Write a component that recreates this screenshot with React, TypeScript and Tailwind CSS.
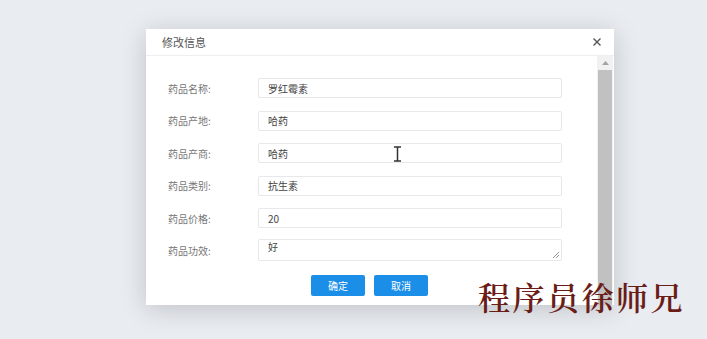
import React from "react";

const rows = [
  { label: "药品名称:", value: "罗红霉素" },
  { label: "药品产地:", value: "哈药" },
  { label: "药品产商:", value: "哈药" },
  { label: "药品类别:", value: "抗生素" },
  { label: "药品价格:", value: "20" },
];

export default function App() {
  const font = { fontFamily: '"Noto Sans CJK SC", "Noto Sans", sans-serif' };
  return (
    <div
      className="relative w-[707px] h-[339px] overflow-hidden bg-[#e9ecf1] pl-[146px] pt-[29px]"
      style={font}
    >
      <div className="w-[468px] h-[276px] bg-white flex flex-col shadow-[0_4px_24px_rgba(0,0,0,0.18)]">
        <div className="h-[27px] flex items-center justify-between pl-[16px] pr-[12px] border-b border-[#eeeeee] shrink-0">
          <span className="text-[11px] text-[#555]">修改信息</span>
          <svg width="10" height="10" viewBox="0 0 10 10">
            <path d="M1.5 1.5 L8.5 8.5 M8.5 1.5 L1.5 8.5" stroke="#555" strokeWidth="1.4" />
          </svg>
        </div>
        <div className="flex-1 flex min-h-0">
          <div className="flex-1 flex flex-col pt-[22px]">
            {rows.map((r) => (
              <div key={r.label} className="flex items-center h-[20px] mb-[12.5px]">
                <span className="w-[112px] pl-[22px] text-[10px] text-[#777]">{r.label}</span>
                <div className="w-[304px] h-[20px] border border-[#e6e8ec] rounded-[2px] flex items-center pl-[9px] text-[10px] text-[#444]">
                  {r.value}
                </div>
              </div>
            ))}
            <div className="flex items-start h-[22px] -mt-[2px]">
              <span className="w-[112px] pl-[22px] text-[10px] text-[#777] pt-[4px]">药品功效:</span>
              <div className="relative w-[304px] h-[22px] border border-[#e6e8ec] rounded-[2px] pl-[9px] text-[10px] text-[#444] leading-[14px]">
                好
                <svg className="absolute right-[1px] bottom-[1px]" width="8" height="8" viewBox="0 0 8 8">
                  <path d="M7 1 L1 7 M7 4 L4 7" stroke="#888" strokeWidth="0.9" />
                </svg>
              </div>
            </div>
            <div className="flex justify-center gap-[9px] mt-[14px] pr-[4px]">
              <button className="w-[54px] h-[21px] bg-[#1b8fe7] text-white text-[10px] rounded-[2px]">确定</button>
              <button className="w-[54px] h-[21px] bg-[#1b8fe7] text-white text-[10px] rounded-[2px]">取消</button>
            </div>
          </div>
          <div className="w-[16px] bg-[#f1f1f1] flex flex-col mr-[1px]">
            <div className="h-[14px] flex items-center justify-center">
              <svg width="7" height="4" viewBox="0 0 7 4">
                <path d="M0 4 L3.5 0 L7 4 Z" fill="#a3a3a3" />
              </svg>
            </div>
            <div className="flex-1 mx-[1px] bg-[#c1c1c1]" />
          </div>
        </div>
      </div>

      <svg className="absolute left-[393px] top-[146px]" width="9" height="16" viewBox="0 0 9 16">
        <path d="M1 1 H8 M1 15 H8 M4.5 1 V15" stroke="#333" strokeWidth="1.5" />
      </svg>

      <div
        className="absolute left-[478px] top-[275px] text-[32px] leading-[42px] tracking-[2.5px] text-[#6a1d17] font-semibold"
        style={{ fontFamily: '"Noto Serif CJK SC", "Noto Sans CJK SC", serif' }}
      >
        程序员徐师兄
      </div>
    </div>
  );
}
